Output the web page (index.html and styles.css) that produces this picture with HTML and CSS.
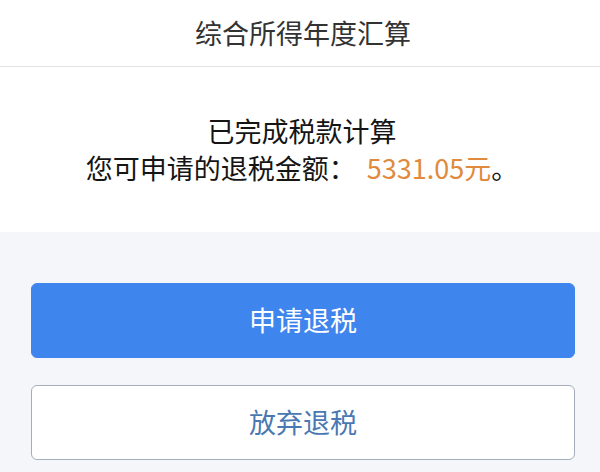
FILE: index.html
```html
<!DOCTYPE html>
<html lang="zh-CN">
<head>
<meta charset="utf-8">
<link rel="stylesheet" href="styles.css">
</head>
<body>
<div class="page">
  <header class="header">综合所得年度汇算</header>
  <section class="result">
    <div class="line">已完成税款计算</div>
    <div class="line">您可申请的退税金额<span class="colon">：</span><span class="amount">5331.05元</span>。</div>
  </section>
  <section class="actions">
    <button class="btn btn-primary">申请退税</button>
    <button class="btn btn-secondary">放弃退税</button>
  </section>
</div>
</body>
</html>
```
FILE: styles.css
```css
html, body {
  margin: 0;
  padding: 0;
}
body {
  font-family: "Noto Sans CJK SC", "Noto Sans", sans-serif;
  background: #f4f6f9;
  width: 600px;
  height: 472px;
  overflow: hidden;
}
.page {
  display: flex;
  flex-direction: column;
}
.header {
  height: 67px;
  box-sizing: border-box;
  background: #ffffff;
  border-bottom: 1px solid #e3e3e3;
  display: flex;
  align-items: center;
  justify-content: center;
  font-size: 27px;
  color: #333333;
  padding-bottom: 2px;
  padding-left: 6px;
}
.result {
  height: 165px;
  box-sizing: border-box;
  background: #ffffff;
  display: flex;
  flex-direction: column;
  align-items: center;
  padding-top: 45px;
  padding-left: 4px;
  color: #151515;
  font-size: 27px;
  line-height: 37px;
}
.colon {
  font-family: "Noto Sans CJK TC", sans-serif;
}
.amount {
  color: #e08a3e;
  margin-left: 11px;
}
.actions {
  display: flex;
  flex-direction: column;
  gap: 27px;
  padding: 51px 25px 0 31px;
}
.btn {
  height: 75px;
  border-radius: 6px;
  font-family: "Noto Sans CJK SC", "Noto Sans", sans-serif;
  font-size: 27px;
  padding: 0;
  padding-bottom: 2px;
  display: flex;
  align-items: center;
  justify-content: center;
}
.btn-primary {
  background: #3f85ee;
  border: 1px solid #3f85ee;
  color: #ffffff;
}
.btn-secondary {
  background: #ffffff;
  border: 1px solid #a4adb9;
  color: #4a78b2;
}
```
